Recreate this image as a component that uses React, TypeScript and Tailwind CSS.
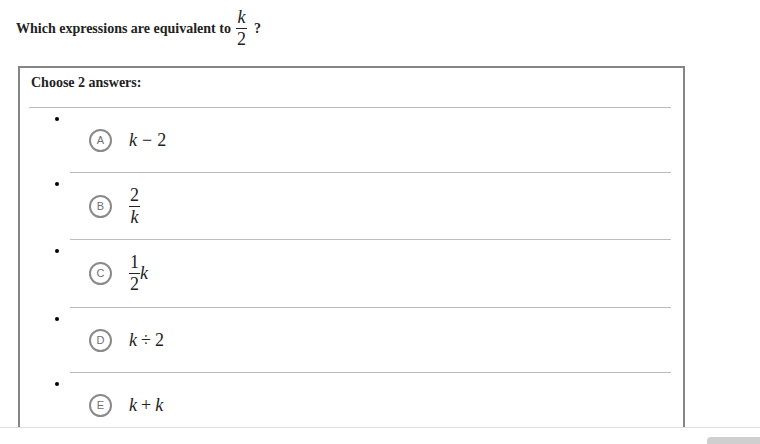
import React from 'react';

const serif = "font-['Liberation_Serif','Times_New_Roman',serif]";

function Frac({ num, den, size = 'text-[18px]' }: { num: React.ReactNode; den: React.ReactNode; size?: string }) {
  return (
    <span className={`inline-flex flex-col items-center align-middle ${size} leading-[17px] font-normal`}>
      <span className="px-[1px] pb-[2px]">{num}</span>
      <span className="h-px w-full bg-[#222]" />
      <span className="px-[1px] pt-[2px]">{den}</span>
    </span>
  );
}

const K = () => <span className="italic">k</span>;

interface Choice {
  letter: string;
  body: React.ReactNode;
  height: string;
}

const choices: Choice[] = [
  {
    letter: 'A',
    height: 'h-[65px]',
    body: (
      <>
        <K />
        <span className="mx-[5px]">−</span>2
      </>
    ),
  },
  { letter: 'B', height: 'h-[67px]', body: <Frac num="2" den={<K />} /> },
  {
    letter: 'C',
    height: 'h-[68px]',
    body: (
      <span className="flex items-center">
        <Frac num="1" den="2" />
        <K />
      </span>
    ),
  },
  {
    letter: 'D',
    height: 'h-[65px]',
    body: (
      <>
        <K />
        <span className="mx-[4px]">÷</span>2
      </>
    ),
  },
  {
    letter: 'E',
    height: 'h-[65px]',
    body: (
      <>
        <K />
        <span className="mx-[4px]">+</span>
        <K />
      </>
    ),
  },
];

function Option({ choice }: { choice: Choice }) {
  return (
    <li className="flex">
      <div className="w-[41px] shrink-0">
        <div className="ml-[26px] mt-[9px] h-[4px] w-[4px] rounded-full bg-black" />
      </div>
      <div className={`flex flex-1 items-center border-b border-[#bdbdbd] pl-[19px] ${choice.height}`}>
        <span className="flex h-[23px] w-[23px] shrink-0 items-center justify-center rounded-full border-2 border-[#8a8a8a] font-['Liberation_Sans',Arial,sans-serif] text-[11px] leading-none text-[#707070]">
          {choice.letter}
        </span>
        <span className={`ml-[17px] flex items-center ${serif} text-[18px] font-normal text-[#222]`}>
          {choice.body}
        </span>
      </div>
    </li>
  );
}

export default function App() {
  return (
    <div className={`flex h-[444px] w-[760px] flex-col overflow-hidden bg-white ${serif} text-[#222]`}>
      <div className="h-[427px] overflow-hidden">
        <div className="flex items-center pl-4 pt-[9px] text-[14px] font-bold">
          <span>Which expressions are equivalent to</span>
          <span className="ml-[5px] mr-[7px]">
            <Frac num={<K />} den="2" />
          </span>
          <span>?</span>
        </div>

        <div className="ml-[18px] mt-[18px] w-[667px] border-2 border-b-0 border-[#858585] pl-[9px] pr-[12px]">
          <div className="border-b border-[#bdbdbd] pb-[14px] pl-[2px] pt-[5px] text-[14px] font-bold leading-[20px]">
            Choose 2 answers:
          </div>
          <ul>
            {choices.map((c) => (
              <Option key={c.letter} choice={c} />
            ))}
          </ul>
        </div>
      </div>

      <div className="flex flex-1 justify-end border-t border-[#dedede] pt-[9px]">
        <div className="h-full w-[53px] rounded-tl-[4px] bg-[#cfcfcf]" />
      </div>
    </div>
  );
}
